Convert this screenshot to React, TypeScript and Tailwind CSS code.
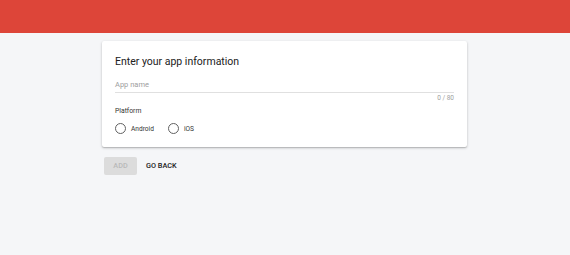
import React from "react";

export default function App() {
  return (
    <div className="min-h-[255px] bg-[#f5f6f8]" style={{ fontFamily: "Roboto, 'Liberation Sans', sans-serif" }}>
      <div className="h-[33px] bg-[#dd4539]" />
      <div className="ml-[102px] w-[365px] pt-[8px]">
        <div className="rounded-[2px] bg-white px-[13px] pb-[13px] pt-[14px] shadow-[0_1px_3px_rgba(0,0,0,0.2),0_1px_1px_rgba(0,0,0,0.14)]">
          <div className="text-[10.5px] leading-[13px] text-[#212121]">Enter your app information</div>
          <div className="mt-[12px] border-b border-[#e0e0e0] pb-[2px] text-[7.5px] leading-[10px] text-[#9e9e9e]">App name</div>
          <div className="mt-[1px] text-right text-[6.5px] leading-[9px] text-[#9e9e9e]">0 / 80</div>
          <div className="mt-[2.5px] text-[6.8px] leading-[10px] text-[#333333]">Platform</div>
          <div className="mt-[7.5px] flex items-center">
            <div className="flex items-center">
              <span className="h-[11px] w-[11px] rounded-full border-[1.5px] border-[#616161]" />
              <span className="ml-[5px] text-[6.6px] leading-[10px] text-[#333333]">Android</span>
            </div>
            <div className="ml-[14px] flex items-center">
              <span className="h-[11px] w-[11px] rounded-full border-[1.5px] border-[#616161]" />
              <span className="ml-[5px] text-[6.6px] leading-[10px] text-[#333333]">iOS</span>
            </div>
          </div>
        </div>
        <div className="mt-[10px] flex items-center">
          <div className="ml-[2px] flex h-[18px] w-[33px] items-center justify-center rounded-[2px] bg-[#dcdcdc] text-[7.3px] font-medium text-[#b9b9b9]">ADD</div>
          <div className="ml-[9px] text-[7.3px] font-medium text-[#212121]">GO BACK</div>
        </div>
      </div>
    </div>
  );
}
